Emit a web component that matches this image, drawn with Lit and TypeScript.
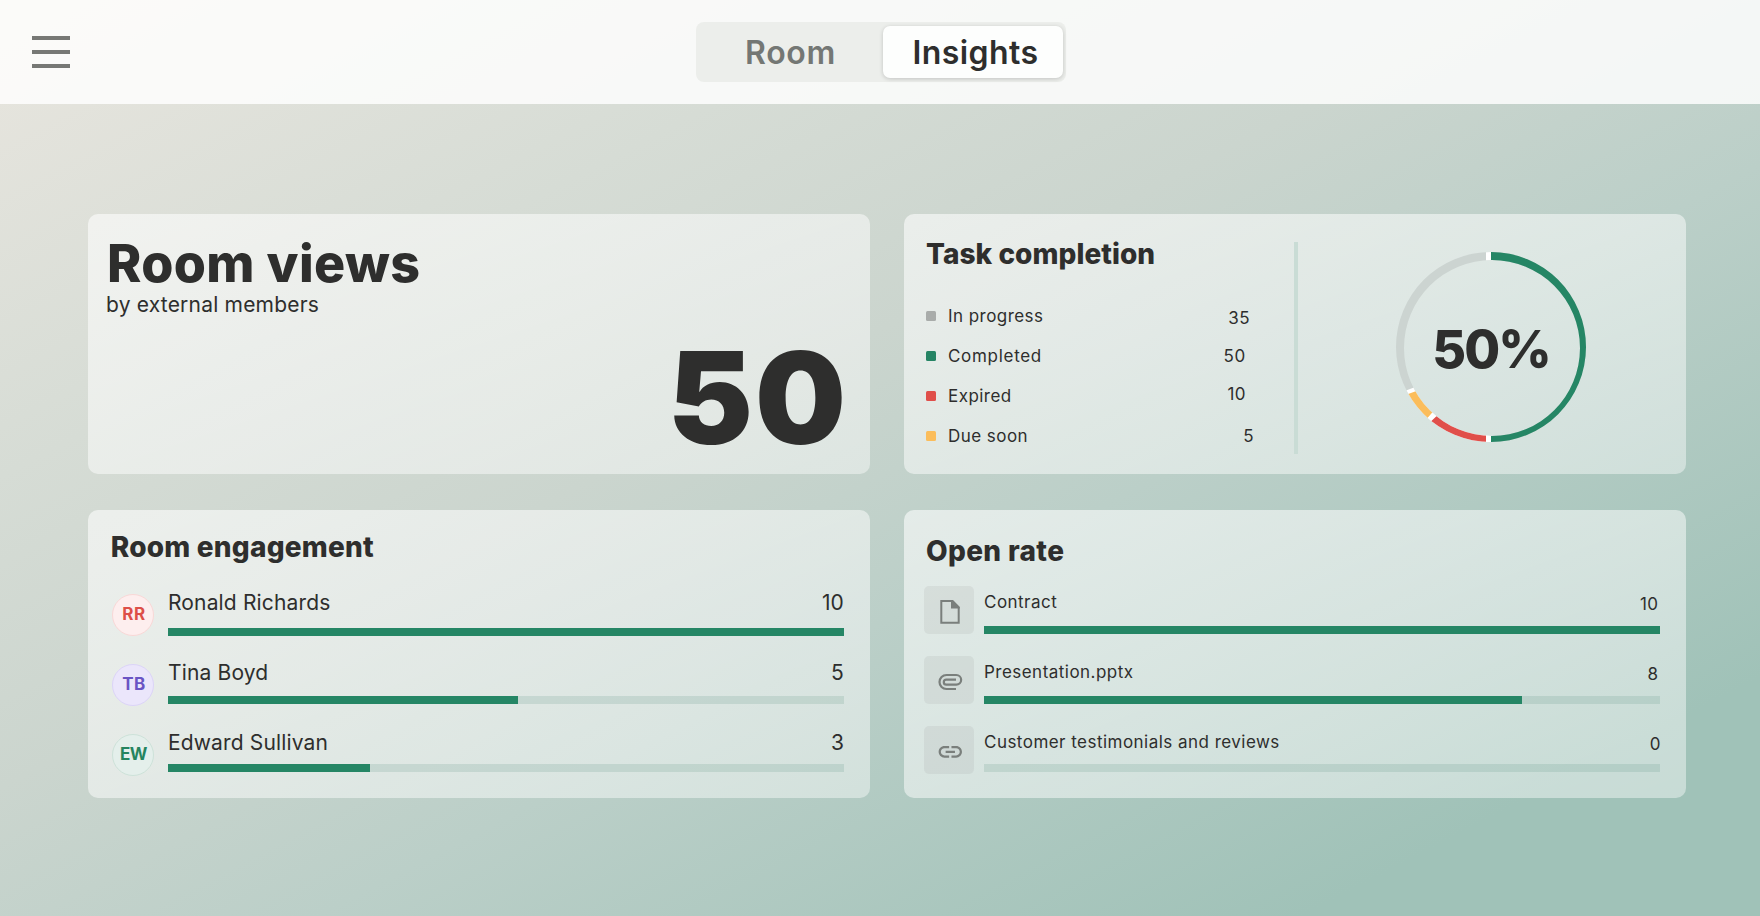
import { LitElement, html, svg, css } from "lit";
import { customElement } from "lit/decorators.js";

interface Member { initials: string; tone: string; name: string; value: number; fill: number; }
interface Doc { icon: "file" | "clip" | "link"; name: string; value: number; fill: number; }

const STATUSES = [
  { tone: "grey", label: "In progress", value: 35 },
  { tone: "green", label: "Completed", value: 50 },
  { tone: "red", label: "Expired", value: 10 },
  { tone: "amber", label: "Due soon", value: 5 },
];

const MEMBERS: Member[] = [
  { initials: "RR", tone: "rose", name: "Ronald Richards", value: 10, fill: 100 },
  { initials: "TB", tone: "violet", name: "Tina Boyd", value: 5, fill: 51.8 },
  { initials: "EW", tone: "mint", name: "Edward Sullivan", value: 3, fill: 29.9 },
];

const DOCS: Doc[] = [
  { icon: "file", name: "Contract", value: 10, fill: 100 },
  { icon: "clip", name: "Presentation.pptx", value: 8, fill: 79.6 },
  { icon: "link", name: "Customer testimonials and reviews", value: 0, fill: 0 },
];

const ICONS = {
  file: svg`<path d="M17.3 15H28.5L34.7 21.5V36.8H17.3Z" fill="none" stroke="currentColor" stroke-width="2"/>
    <path d="M27 14H28.6L35.7 21V22.6H27Z" fill="currentColor"/>`,
  clip: svg`<path d="M32 33H22.5a7 7 0 0 1 0-14H32.3a4.85 4.85 0 0 1 0 9.7H22.3a2.5 2.5 0 0 1 0-5H32" fill="none" stroke="currentColor" stroke-width="2.2"/>`,
  link: svg`<path transform="translate(12.3 11.8) scale(1.1667)" fill="currentColor" d="M3.9 12c0-1.71 1.39-3.1 3.1-3.1h4V7H7c-2.76 0-5 2.24-5 5s2.24 5 5 5h4v-1.9H7c-1.71 0-3.1-1.39-3.1-3.1zM8 13h8v-2H8v2zm9-6h-4v1.9h4c1.71 0 3.1 1.39 3.1 3.1s-1.39 3.1-3.1 3.1h-4V17h4c2.76 0 5-2.24 5-5s-2.24-5-5-5z"/>`,
};

@customElement("app-root")
export class AppRoot extends LitElement {
  static styles = css`
    :host {
      display: block;
      box-sizing: border-box;
      height: 916px;
      color: #2e2e2d;
      font-family: Inter, "Liberation Sans", sans-serif;
      background: linear-gradient(to bottom right, #e9e6df 0%, #d6dcd5 26%, #cbd5ce 43%, #bbcfc8 59%, #a0c2b8 87%);
    }
    * { box-sizing: border-box; }
    h1, h2, p { margin: 0; }
    header {
      height: 104px;
      padding: 0 32px;
      display: grid;
      grid-template-columns: 38px 370px;
      column-gap: 626px;
      background: rgba(255, 255, 255, 0.82);
    }
    .menu {
      display: flex;
      flex-direction: column;
      gap: 10px;
      padding-top: 36px;
    }
    .menu span { height: 4px; background: #777875; }
    .tabs {
      margin-top: 22px;
      height: 60px;
      padding: 4px 3px 4px 4px;
      display: grid;
      grid-template-columns: 1fr 180px;
      border-radius: 8px;
      background: #eceeeb;
    }
    .tab {
      line-height: 54px;
      height: 52px;
      text-align: center;
      font-size: 32px;
      font-weight: 600;
      letter-spacing: 0.7px;
      color: #747774;
      padding-right: 2px;
    }
    .tab.active {
      color: #2e2e2d;
      letter-spacing: 0.4px;
      padding: 0 0 0 5px;
      border-radius: 7px;
      background: #fdfefd;
      box-shadow: 0 1px 4px rgba(0, 0, 0, 0.18);
    }
    main {
      padding: 110px 74px 0 88px;
      display: grid;
      grid-template: 260px 288px / 782px 782px;
      gap: 36px 34px;
    }
    .card {
      border-radius: 10px;
      background: linear-gradient(to bottom right, rgba(255, 255, 255, 0.58), rgba(255, 255, 255, 0.42));
    }
    .views {
      display: flex;
      flex-direction: column;
      padding: 20px 22px 12px 19px;
    }
    .views h1 { font-size: 52px; line-height: 60px; font-weight: 800; letter-spacing: 0.35px; }
    .views p { font-size: 21px; line-height: 24px; letter-spacing: 0.2px; margin: -1px 0 0 -1px; }
    .big {
      margin-top: auto;
      text-align: right;
      font-size: 128px;
      line-height: 128px;
      font-weight: 900;
      letter-spacing: 2px;
    }
    h2 { font-size: 28px; line-height: 36px; font-weight: 800; letter-spacing: 0.05px; }
    .tasks { display: flex; padding: 22px 0 0 22px; }
    .legend { width: 328px; }
    .status {
      display: flex;
      align-items: center;
      height: 40px;
      font-size: 17px;
      line-height: 24px;
      letter-spacing: 0.45px;
    }
    .status:nth-child(2) { letter-spacing: 0.7px; }
    .statuses { padding-top: 24px; }
    .swatch { width: 10px; height: 10px; border-radius: 1.5px; margin-right: 12px; }
    .grey { background: #a9acaa; }
    .green { background: #258464; }
    .red { background: #e04f4a; }
    .amber { background: #fbbd5b; }
    .status .value { margin-left: auto; padding-right: 4px; }
    .status:nth-child(1) .value { padding-top: 4px; }
    .status:nth-child(2) .value { padding-right: 8px; }
    .status:nth-child(3) .value { padding: 0 8px 4px 0; }
    .status:nth-child(4) .value { padding-right: 0; }
    .rule { width: 4px; height: 212px; margin: 6px 98px 0 40px; background: #c9dcd5; }
    .donut { display: grid; width: 190px; height: 190px; margin-top: 16px; }
    .donut > * { grid-area: 1 / 1; }
    .percent {
      align-self: center;
      text-align: center;
      font-size: 52px;
      line-height: 60px;
      font-weight: 800;
      letter-spacing: -2px;
      padding-top: 5px;
    }
    .engagement { padding: 19px 26px 0 24px; }
    .list { display: flex; flex-direction: column; }
    .row { display: grid; height: 70px; align-items: start; }
    .engagement .list { padding-top: 25px; }
    .engagement .row { grid-template-columns: 42px 676px; column-gap: 14px; }
    .engagement h2 { margin-left: -1.3px; letter-spacing: 0.22px; }
    .avatar {
      width: 42px;
      height: 42px;
      margin-top: 3.5px;
      border: 1.5px solid;
      border-radius: 50%;
      text-align: center;
      font-size: 17px;
      line-height: 39px;
      font-weight: 700;
      padding-left: 2px;
      letter-spacing: 0.5px;
    }
    .rose { color: #dd4f48; background: #fdeeee; border-color: #f9d8d7; }
    .violet { color: #6a54c4; background: #ebe6fb; border-color: #dcd4f8; }
    .mint { color: #25845f; background: #e4efeb; border-color: #cde2d9; letter-spacing: -0.5px; padding-left: 1px; }
    .line { display: flex; justify-content: space-between; }
    .engagement .line { font-size: 21px; line-height: 24px; letter-spacing: 0.15px; padding-top: 1px; }
    .track { height: 8px; background: rgba(90, 145, 125, 0.18); }
    .bar { height: 8px; background: #258665; }
    .engagement .track { margin-top: 13px; }
    .engagement .row:nth-child(2) .track { margin-top: 11px; }
    .engagement .row:nth-child(3) .track { margin-top: 9px; }
    .opens { padding: 22px 26px 0 20px; }
    .opens h2 { padding: 1px 0 0 2px; letter-spacing: 0.35px; }
    .opens .list { padding-top: 17px; }
    .opens .row { grid-template-columns: 50px 676px; column-gap: 10px; }
    .tile { width: 50px; height: 48px; border-radius: 5px; color: #7a7f7c; background: rgba(150, 150, 146, 0.14); }
    .tile svg { display: block; }
    .opens .line { font-size: 17px; line-height: 24px; letter-spacing: 0.47px; padding-top: 4px; }
    .opens .value { margin: 2px 1.5px -2px 0; }
    .opens .row:nth-child(3) .value { margin-right: -1px; }
    .opens .track { margin-top: 12px; }
    .opens .row:nth-child(3) .track { margin-top: 10px; }
  `;

  private meter(name: string, value: number, fill: number) {
    return html`<div>
      <div class="line"><span>${name}</span><span class="value">${value}</span></div>
      <div class="track"><div class="bar" style="width:${fill}%"></div></div>
    </div>`;
  }

  private donut() {
    return html`<div class="donut">
      <svg width="190" height="190" viewBox="0 0 190 190">
        <defs>
          <clipPath id="ring">
            <path clip-rule="evenodd" d="M95 0a95 95 0 1 1 0 190a95 95 0 1 1 0-190ZM96 8a88 88 0 1 0 0 176a88 88 0 1 0 0-176Z"/>
          </clipPath>
        </defs>
        <g clip-path="url(#ring)">
          <rect width="190" height="190" fill="#ccd4d1"/>
          <path d="M90 80L17.3 135.7L4 140.7L0 190H95Z" fill="#fff"/>
          <path d="M60 124.6L19.7 139.3L6 144.2L10 190L32.3 165.3L50 145Z" fill="#fbbd5b"/>
          <path d="M36.3 160.7L50 145L95 95V190H10L32.3 165.3Z" fill="#fff"/>
          <path d="M90 95L60 146L40.7 164L25 178.7V190H90Z" fill="#e04f4a"/>
          <rect x="90" width="5" height="190" fill="#fff"/>
          <rect x="95" width="95" height="190" fill="#258665"/>
        </g>
      </svg>
      <div class="percent">50%</div>
    </div>`;
  }

  render() {
    return html`
      <header>
        <div class="menu"><span></span><span></span><span></span></div>
        <nav class="tabs"><div class="tab">Room</div><div class="tab active">Insights</div></nav>
      </header>
      <main>
        <section class="card views">
          <h1>Room views</h1>
          <p>by external members</p>
          <div class="big">50</div>
        </section>
        <section class="card tasks">
          <div class="legend">
            <h2>Task completion</h2>
            <div class="statuses">
              ${STATUSES.map((s) => html`<div class="status">
                <span class="swatch ${s.tone}"></span><span>${s.label}</span><span class="value">${s.value}</span>
              </div>`)}
            </div>
          </div>
          <div class="rule"></div>
          ${this.donut()}
        </section>
        <section class="card engagement">
          <h2>Room engagement</h2>
          <div class="list">
            ${MEMBERS.map((m) => html`<div class="row">
              <div class="avatar ${m.tone}">${m.initials}</div>${this.meter(m.name, m.value, m.fill)}
            </div>`)}
          </div>
        </section>
        <section class="card opens">
          <h2>Open rate</h2>
          <div class="list">
            ${DOCS.map((d) => html`<div class="row">
              <div class="tile"><svg width="50" height="48" viewBox="0 0 50 48">${ICONS[d.icon]}</svg></div>
              ${this.meter(d.name, d.value, d.fill)}
            </div>`)}
          </div>
        </section>
      </main>
    `;
  }
}
